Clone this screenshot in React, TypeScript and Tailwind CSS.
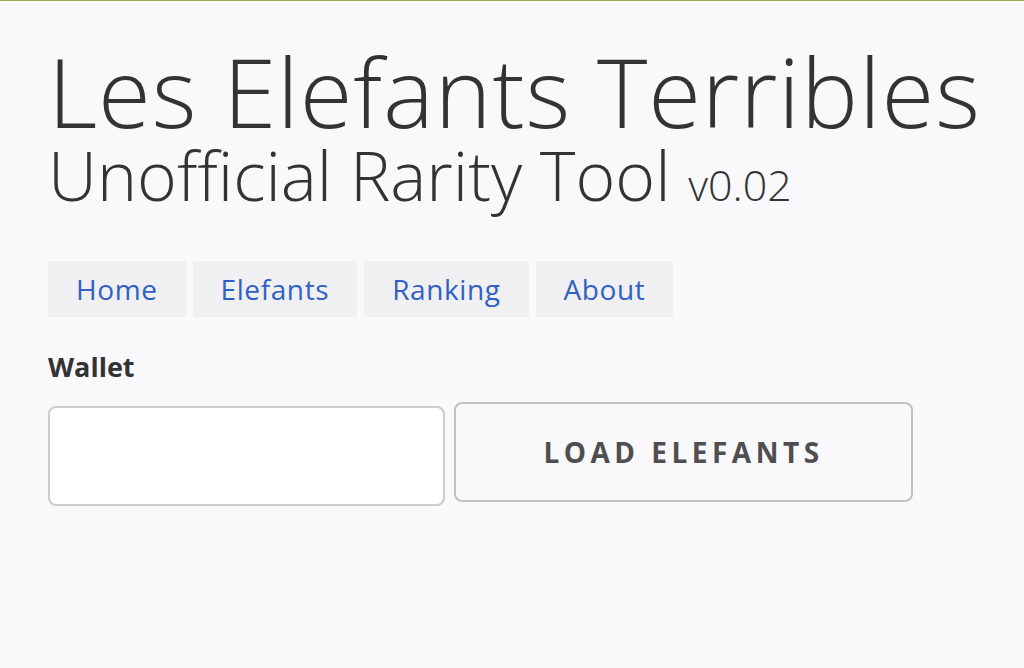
// Rarity tool landing: title, nav tabs, wallet form.
const NAV = ["Home", "Elefants", "Ranking", "About"];

export default function App() {
  return (
    <div className="min-h-[668px] border-t border-[#a3a552] bg-[#f9f8fa] font-['Open_Sans',sans-serif] text-[#333234]">
      <div className="px-[48px] pt-[40px]">
        <h1 className="text-[96px] leading-[100px] font-light tracking-[0.9px] whitespace-nowrap">Les Elefants Terribles</h1>
        <h2 className="text-[68px] leading-[68px] font-light whitespace-nowrap">
          Unofficial Rarity Tool <span className="text-[43px]">v0.02</span>
        </h2>

        <nav className="mt-[42px] flex gap-[7px]">
          {NAV.map((n) => (
            <a key={n} className="flex h-[56px] items-center bg-[#f0eff2] px-[28px] text-[28px] tracking-[0.6px] text-[#2f61c4]">
              {n}
            </a>
          ))}
        </nav>

        <div className="mt-[30px] text-[27px] font-bold">Wallet</div>

        <div className="mt-[14px] flex items-start gap-[9px]">
          <input className="mt-[4px] h-[100px] w-[397px] rounded-[8px] border-2 border-[#cccbce] bg-white" />
          <button className="flex h-[100px] w-[459px] items-center justify-center rounded-[8px] border-2 border-[#c2c1c4] text-[28px] font-bold tracking-[4.5px] text-[#4f4e50]">
            LOAD ELEFANTS
          </button>
        </div>
      </div>
    </div>
  );
}
